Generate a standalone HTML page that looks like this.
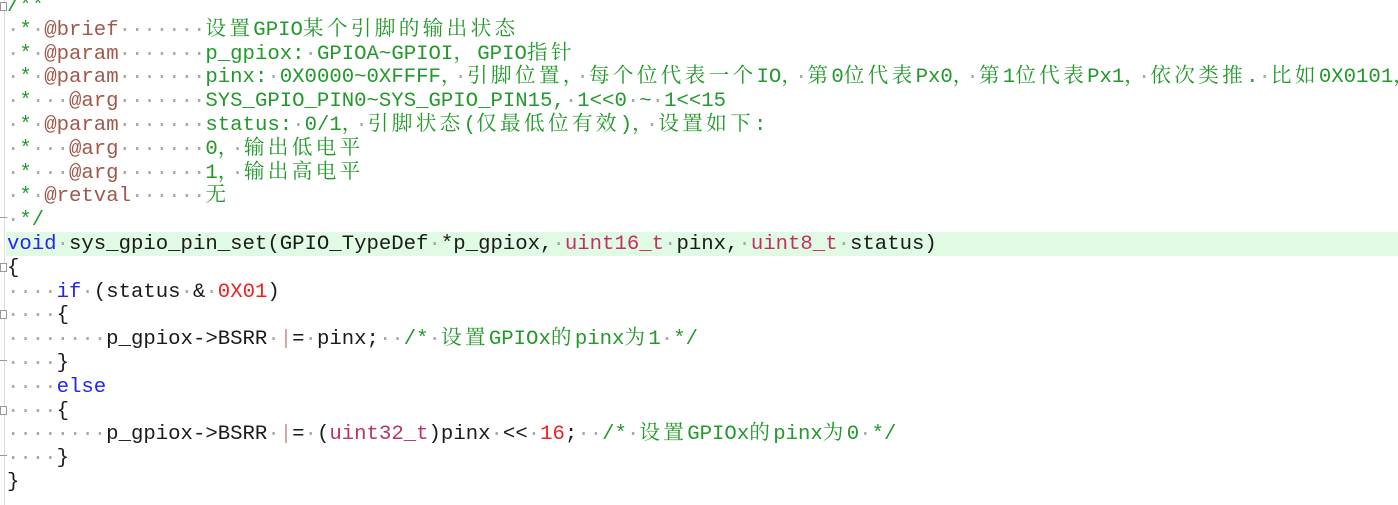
<!DOCTYPE html>
<html><head><meta charset="utf-8"><style>
html,body{margin:0;padding:0;background:#fff;width:1398px;height:505px;overflow:hidden;position:relative}
.code{position:absolute;left:7px;top:-5px;margin:0;font-family:"Liberation Mono","Noto Serif CJK SC",monospace;font-size:20.67px;color:#1a1a1a}
.l{height:23.8px;line-height:23.8px;white-space:pre;overflow:visible}
.d{color:#a8a8a8}
.g{color:#22992a}
.t{color:#a0584a}
.k{color:#2424f0}
.u{color:#c2306a}
.n{color:#f02020}
.c{font-family:"Noto Serif CJK SC","Noto Sans CJK SC",serif;letter-spacing:3.3px;line-height:0}
.bar{color:#d09898}
.hl{position:absolute;left:6px;right:0;top:232px;height:23.8px;background:#e0fae4}
.gut{position:absolute;left:4px;top:0;width:1px;height:505px;background:#dcdcdc}
.fb{position:absolute;left:0;width:7px;height:9px;border:1px solid #999;box-sizing:border-box;background:#fff}
.fe{position:absolute;left:0;width:7px;height:1px;background:#999}
</style></head><body>
<div class="hl"></div>
<div class="gut"></div>
<div class="fb" style="top:2px"></div>
<div class="fb" style="top:263px"></div>
<div class="fb" style="top:310px"></div>
<div class="fb" style="top:406px"></div>
<div class="fe" style="top:217px"></div>
<div class="fe" style="top:360px"></div>
<div class="fe" style="top:455px"></div>
<div class="code">
<div class="l"><span class="g">/**</span></div>
<div class="l"><span class="d">·</span><span class="g">*</span><span class="d">·</span><span class="t">@brief</span><span class="d">·······</span><span class="g"><span class="c">设置</span>GPIO<span class="c">某个引脚的输出状态</span></span></div>
<div class="l"><span class="d">·</span><span class="g">*</span><span class="d">·</span><span class="t">@param</span><span class="d">·······</span><span class="g">p_gpiox:<span class="d">·</span>GPIOA~GPIOI<span class="c">，</span>GPIO<span class="c">指针</span></span></div>
<div class="l"><span class="d">·</span><span class="g">*</span><span class="d">·</span><span class="t">@param</span><span class="d">·······</span><span class="g">pinx:<span class="d">·</span>0X0000~0XFFFF<span class="c">，</span><span class="d">·</span><span class="c">引脚位置，</span><span class="d">·</span><span class="c">每个位代表一个</span>IO<span class="c">，</span><span class="d">·</span><span class="c">第</span>0<span class="c">位代表</span>Px0<span class="c">，</span><span class="d">·</span><span class="c">第</span>1<span class="c">位代表</span>Px1<span class="c">，</span><span class="d">·</span><span class="c">依次类推</span>.<span class="d">·</span><span class="c">比如</span>0X0101<span class="c">，</span></span></div>
<div class="l"><span class="d">·</span><span class="g">*</span><span class="d">···</span><span class="t">@arg</span><span class="d">·······</span><span class="g">SYS_GPIO_PIN0~SYS_GPIO_PIN15,<span class="d">·</span>1&lt;&lt;0<span class="d">·</span>~<span class="d">·</span>1&lt;&lt;15</span></div>
<div class="l"><span class="d">·</span><span class="g">*</span><span class="d">·</span><span class="t">@param</span><span class="d">·······</span><span class="g">status:<span class="d">·</span>0/1<span class="c">，</span><span class="d">·</span><span class="c">引脚状态</span>(<span class="c">仅最低位有效</span>)<span class="c">，</span><span class="d">·</span><span class="c">设置如下</span>:</span></div>
<div class="l"><span class="d">·</span><span class="g">*</span><span class="d">···</span><span class="t">@arg</span><span class="d">·······</span><span class="g">0<span class="c">，</span><span class="d">·</span><span class="c">输出低电平</span></span></div>
<div class="l"><span class="d">·</span><span class="g">*</span><span class="d">···</span><span class="t">@arg</span><span class="d">·······</span><span class="g">1<span class="c">，</span><span class="d">·</span><span class="c">输出高电平</span></span></div>
<div class="l"><span class="d">·</span><span class="g">*</span><span class="d">·</span><span class="t">@retval</span><span class="d">······</span><span class="g"><span class="c">无</span></span></div>
<div class="l"><span class="d">·</span><span class="g">*/</span></div>
<div class="l"><span class="k">void</span><span class="d">·</span>sys_gpio_pin_set(GPIO_TypeDef<span class="d">·</span>*p_gpiox,<span class="d">·</span><span class="u">uint16_t</span><span class="d">·</span>pinx,<span class="d">·</span><span class="u">uint8_t</span><span class="d">·</span>status)</div>
<div class="l">{</div>
<div class="l"><span class="d">····</span><span class="k">if</span><span class="d">·</span>(status<span class="d">·</span>&amp;<span class="d">·</span><span class="n">0X01</span>)</div>
<div class="l"><span class="d">····</span>{</div>
<div class="l"><span class="d">········</span>p_gpiox-&gt;BSRR<span class="d">·</span><span class="bar">|</span>=<span class="d">·</span>pinx;<span class="d">··</span><span class="g">/*<span class="d">·</span><span class="c">设置</span>GPIOx<span class="c">的</span>pinx<span class="c">为</span>1<span class="d">·</span>*/</span></div>
<div class="l"><span class="d">····</span>}</div>
<div class="l"><span class="d">····</span><span class="k">else</span></div>
<div class="l"><span class="d">····</span>{</div>
<div class="l"><span class="d">········</span>p_gpiox-&gt;BSRR<span class="d">·</span><span class="bar">|</span>=<span class="d">·</span>(<span class="u">uint32_t</span>)pinx<span class="d">·</span>&lt;&lt;<span class="d">·</span><span class="n">16</span>;<span class="d">··</span><span class="g">/*<span class="d">·</span><span class="c">设置</span>GPIOx<span class="c">的</span>pinx<span class="c">为</span>0<span class="d">·</span>*/</span></div>
<div class="l"><span class="d">····</span>}</div>
<div class="l">}</div>
</div>
</body></html>
